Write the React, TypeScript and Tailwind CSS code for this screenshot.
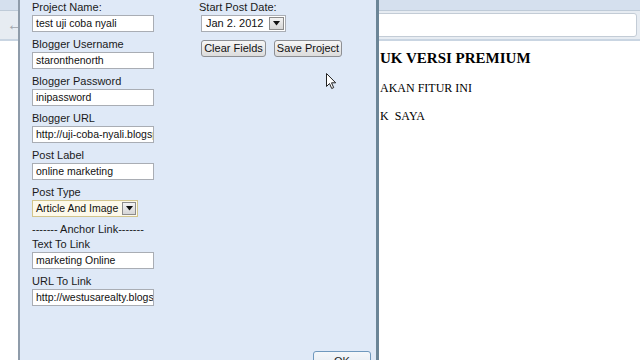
import React from "react";

const fields = [
  { label: "Project Name:", value: "test uji coba nyali" },
  { label: "Blogger Username", value: "staronthenorth" },
  { label: "Blogger Password", value: "inipassword" },
  { label: "Blogger URL", value: "http://uji-coba-nyali.blogspot.com" },
  { label: "Post Label", value: "online marketing" },
];

const linkFields = [
  { label: "Text To Link", value: "marketing Online" },
  { label: "URL To Link", value: "http://westusarealty.blogspot.com" },
];

function Arrow() {
  return (
    <svg width="7" height="5" viewBox="0 0 7 5">
      <path d="M0 0h7L3.5 4.5z" fill="#111" />
    </svg>
  );
}

function TextBox({ value }: { value: string }) {
  return (
    <div className="h-[17px] w-[122px] border border-[#a9adb4] bg-white pl-[3px] text-[10.5px] leading-[15px] text-[#111] whitespace-nowrap overflow-hidden">
      {value}
    </div>
  );
}

function Field({ label, value }: { label: string; value: string }) {
  return (
    <div className="mb-[5px]">
      <div className="h-[15px] leading-[15px]">{label}</div>
      <TextBox value={value} />
    </div>
  );
}

function Button({ children, w }: { children: React.ReactNode; w: string }) {
  return (
    <div className={`${w} h-[17px] rounded-[3px] border border-[#8d8f93] bg-gradient-to-b from-[#f6f6f6] to-[#dcdcdc] text-center leading-[15px] text-[#111]`}>
      {children}
    </div>
  );
}

export default function App() {
  return (
    <div className="relative w-[640px] h-[360px] overflow-hidden bg-white" style={{ fontFamily: '"Liberation Sans", Arial, sans-serif' }}>
      {/* browser behind */}
      <div className="h-[11px] bg-[#d5e0ee] border-b border-[#bfcbd8]" />
      <div className="flex h-[30px] items-center bg-[#e7ecf2] border-b-2 border-[#c9d5e2]">
        <div className="w-[30px] flex items-center justify-center text-[#a0a6ad] text-[16px]">←</div>
        <div className="ml-auto mr-[3px] h-[24px] w-[600px] rounded-[3px] border border-[#c3ccd6] bg-white" />
      </div>
      <div className="pl-[380px] pt-[8px] text-black" style={{ fontFamily: '"Liberation Serif", "Times New Roman", serif' }}>
        <div className="text-[15px] font-bold leading-[18px]">UK VERSI PREMIUM</div>
        <div className="mt-[14px] text-[12px] leading-[15px]">AKAN FITUR INI</div>
        <div className="mt-[13px] text-[12px] leading-[15px] whitespace-pre">K  SAYA</div>
      </div>

      {/* dialog window */}
      <div className="absolute left-[18px] top-0 w-[361px] h-[380px] border-l-2 border-[#8f9caa] border-r-[3px] border-r-[#6b8597] bg-[#dfe9f7] text-[11px] text-[#1a1a1a]">
        <div className="flex">
          <div className="w-[179px] pl-[12px]">
            {fields.map((f) => (
              <Field key={f.label} label={f.label} value={f.value} />
            ))}
            <div className="h-[15px] leading-[15px]">Post Type</div>
            <div className="mb-[5px] flex h-[17px] w-[106px] items-center border border-[#d2c58c] bg-[#fdf9ea] pl-[3px] pr-[1px]">
              <span className="flex-1 text-[10.5px] leading-[15px] text-[#111]">Article And Image</span>
              <div className="flex h-[13px] w-[14px] items-center justify-center border border-[#8b8b8b] bg-gradient-to-b from-[#f3f3f3] to-[#d6d6d6]">
                <Arrow />
              </div>
            </div>
            <div className="h-[15px] leading-[15px]">------- Anchor Link-------</div>
            {linkFields.map((f) => (
              <Field key={f.label} label={f.label} value={f.value} />
            ))}
          </div>
          <div className="flex flex-col">
            <div className="h-[15px] leading-[15px]">Start Post Date:</div>
            <div className="ml-[2px] flex h-[17px] w-[85px] items-center border border-[#a9adb4] bg-white pl-[4px] pr-[1px]">
              <span className="flex-1 leading-[15px] text-[#111]">Jan 2. 2012</span>
              <div className="flex h-[13px] w-[15px] items-center justify-center border border-[#8b8b8b] bg-gradient-to-b from-[#f3f3f3] to-[#d6d6d6]">
                <Arrow />
              </div>
            </div>
            <div className="ml-[2px] mt-[8px] flex gap-[8px]">
              <Button w="w-[65px]">Clear Fields</Button>
              <Button w="w-[68px]">Save Project</Button>
            </div>
          </div>
        </div>
        <div className="absolute left-[293px] top-[351px] h-[22px] w-[58px] rounded-[3px] border border-[#6f98bd] bg-gradient-to-b from-[#f4f7fa] to-[#dfe6ee] text-center leading-[18px] text-[#222]">
          OK
        </div>
      </div>

      {/* mouse cursor */}
      <svg className="absolute left-[326px] top-[73px]" width="11" height="17" viewBox="0 0 11 17">
        <path d="M0.5 0.5v13l3-3 2.2 5 2-0.9-2.2-4.8h4.2z" fill="white" stroke="#222" strokeWidth="1" />
      </svg>
    </div>
  );
}
